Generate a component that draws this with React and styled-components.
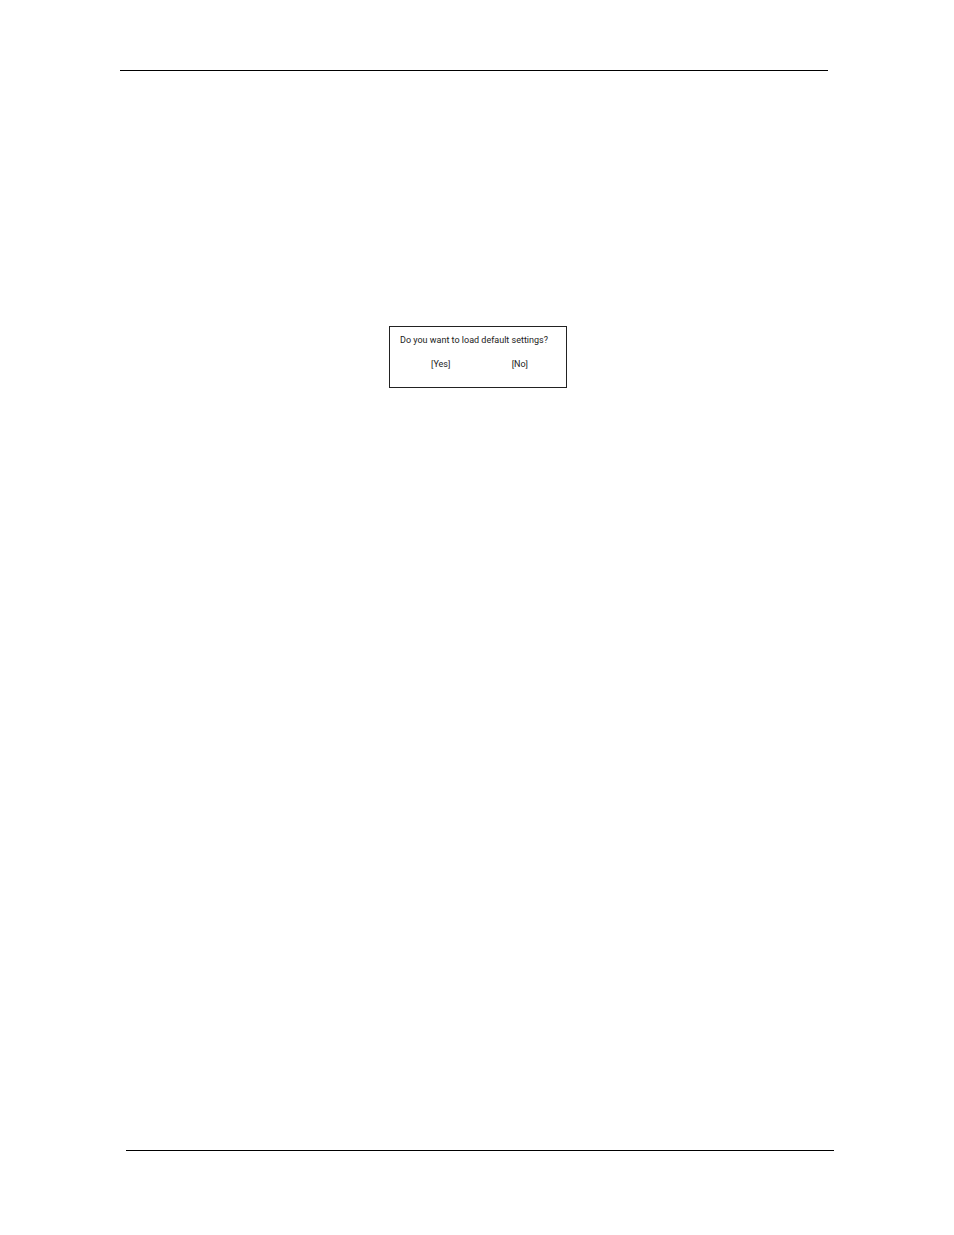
import React from 'react';
import styled, { createGlobalStyle } from 'styled-components';

const GlobalStyle = createGlobalStyle`
  * { box-sizing: border-box; }
  body { margin: 0; background: #fff; }
`;

const Page = styled.div`
  min-height: 100vh;
  display: flex;
  flex-direction: column;
  padding: 70px 120px 84px;
`;

const Rule = styled.hr`
  width: 100%;
  height: 1px;
  margin: 0;
  border: 0;
  background: #000;
`;

const HeaderRule = styled.header`
  padding-right: 6px;
`;

const FooterRule = styled.footer`
  padding-left: 6px;
`;

const Content = styled.main`
  flex: 1;
  display: flex;
  justify-content: center;
  align-items: flex-start;
  padding: 255px 0 24px 2px;
`;

const Dialog = styled.section`
  width: 178px;
  min-height: 62px;
  border: 1px solid #222;
  padding: 7px 10px;
  color: #222;
  font: 9px/12px Roboto, "Liberation Sans", sans-serif;
`;

const Question = styled.p`
  margin: 0 0 12px;
  white-space: nowrap;
`;

const Choices = styled.div`
  display: flex;
  justify-content: space-between;
  padding: 0 28px 0 31px;
`;

const Choice = styled.button`
  padding: 0;
  border: 0;
  background: none;
  color: inherit;
  font: inherit;
  cursor: pointer;
`;

export default function App() {
  return (
    <>
      <GlobalStyle />
      <Page>
        <HeaderRule><Rule /></HeaderRule>
        <Content>
          <Dialog role="dialog" aria-labelledby="question">
            <Question id="question">Do you want to load default settings?</Question>
            <Choices>
              <Choice type="button">[Yes]</Choice>
              <Choice type="button">[No]</Choice>
            </Choices>
          </Dialog>
        </Content>
        <FooterRule><Rule /></FooterRule>
      </Page>
    </>
  );
}
